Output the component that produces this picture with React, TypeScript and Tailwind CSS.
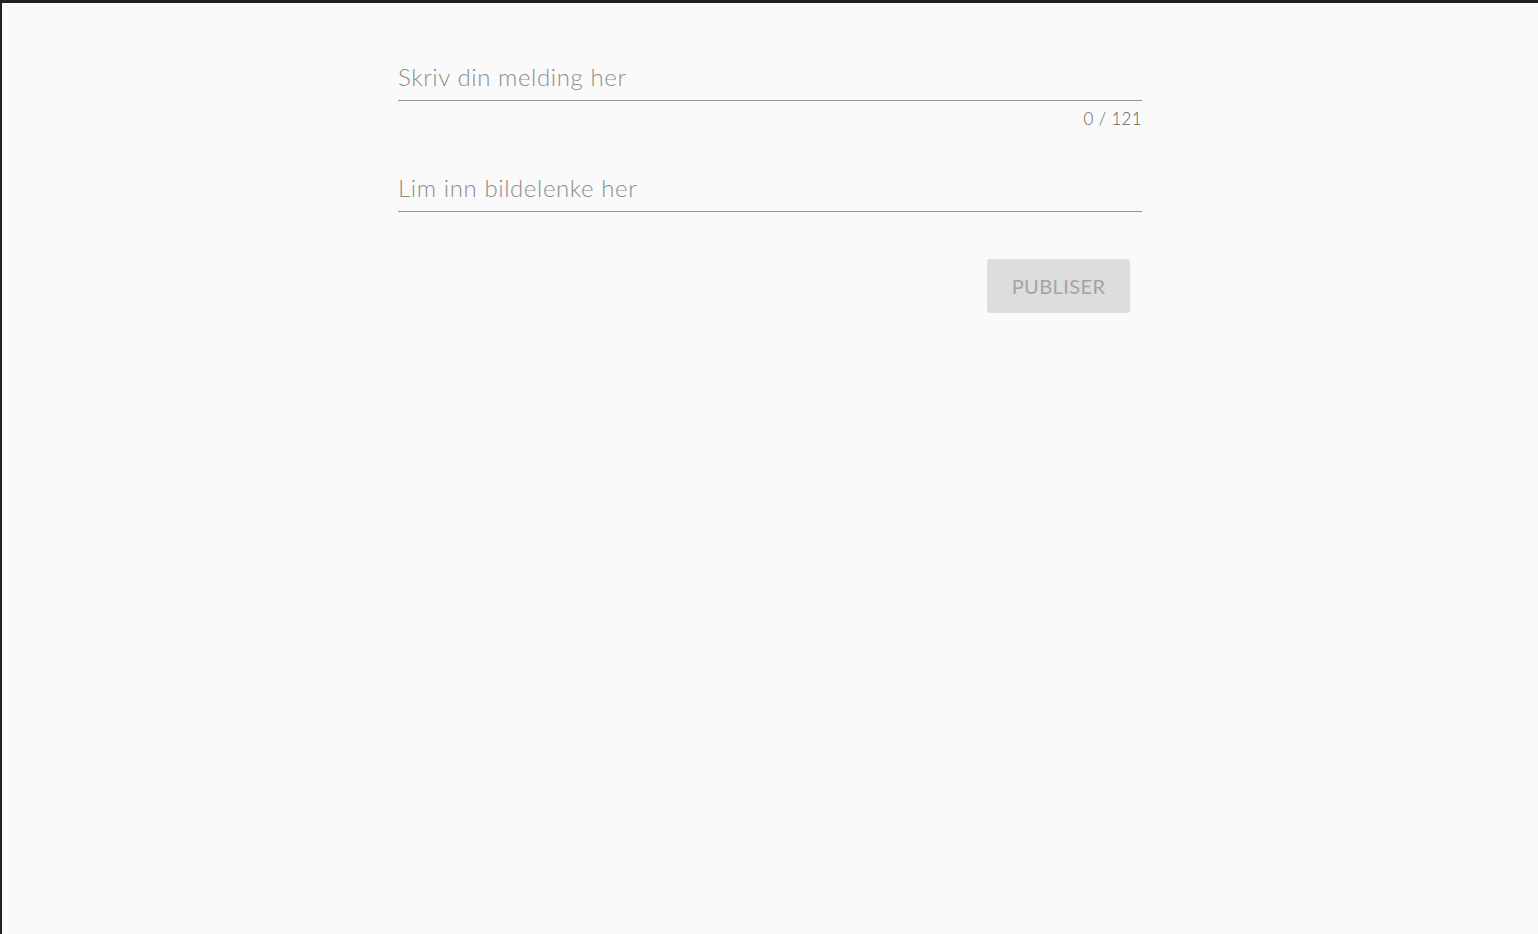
import { useState } from "react";

const MAX_LENGTH = 121;

const App = () => {
  const [message, setMessage] = useState("");
  const [imageUrl, setImageUrl] = useState("");

  const canPublish = message.trim().length > 0;

  return (
    <div
      className="min-h-screen border-t-[3px] border-l-2 border-[#222222] bg-[#fafafa]"
      style={{ fontFamily: "Lato, 'Noto Sans', sans-serif" }}
    >
      <form
        className="mx-auto flex w-[744px] flex-col pt-[57px]"
        onSubmit={(e) => e.preventDefault()}
      >
        <div className="flex flex-col">
          <input
            type="text"
            value={message}
            maxLength={MAX_LENGTH}
            onChange={(e) => setMessage(e.target.value)}
            placeholder="Skriv din melding her"
            className="h-[41px] border-b border-[#949494] bg-transparent pb-[7px] text-[24px] font-light tracking-[0.025em] text-[#333] outline-none placeholder:text-[#8c8c8c]"
          />
          <div className="flex justify-end pt-[8px] text-[17px] font-light leading-5 tracking-[0.02em] text-[#5f5f5f]">
            {message.length} / {MAX_LENGTH}
          </div>
        </div>

        <div className="mt-[42px] flex flex-col">
          <input
            type="text"
            value={imageUrl}
            onChange={(e) => setImageUrl(e.target.value)}
            placeholder="Lim inn bildelenke her"
            className="h-[41px] border-b border-[#949494] bg-transparent pb-[7px] text-[24px] font-light tracking-[0.025em] text-[#333] outline-none placeholder:text-[#8c8c8c]"
          />
        </div>

        <div className="mt-[47px] flex justify-end pr-3">
          <button
            type="submit"
            disabled={!canPublish}
            className="h-[54px] w-[143px] rounded-[3px] bg-[#dddddd] text-[20px] tracking-[0.02em] text-[#a3a3a3]"
          >
            PUBLISER
          </button>
        </div>
      </form>
    </div>
  );
};

export default App;
